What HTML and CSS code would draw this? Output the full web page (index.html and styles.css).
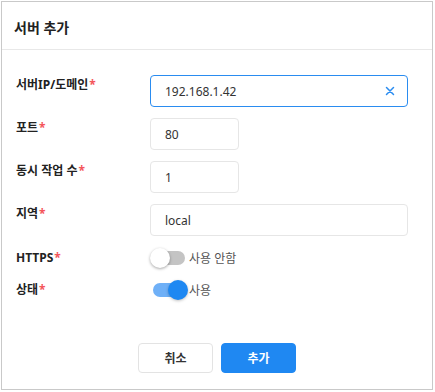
FILE: index.html
```html
<!DOCTYPE html>
<html lang="ko">
<head>
<meta charset="utf-8">
<link rel="stylesheet" href="styles.css">
</head>
<body>
<div class="dialog">
  <div class="header"><span class="title">서버 추가</span></div>
  <div class="body">
    <div class="row">
      <label class="label">서버IP/도메인<span class="req">*</span></label>
      <div class="input long focused">
        <span class="value">192.168.1.42</span>
        <svg class="clear" width="10" height="10" viewBox="0 0 10 10"><path d="M1.5 1.5 L8.5 8.5 M8.5 1.5 L1.5 8.5" stroke="#2a8cf0" stroke-width="1.5" stroke-linecap="round"/></svg>
      </div>
    </div>
    <div class="row">
      <label class="label">포트<span class="req">*</span></label>
      <div class="input short"><span class="value">80</span></div>
    </div>
    <div class="row">
      <label class="label">동시 작업 수<span class="req">*</span></label>
      <div class="input short"><span class="value">1</span></div>
    </div>
    <div class="row">
      <label class="label">지역<span class="req">*</span></label>
      <div class="input long"><span class="value">local</span></div>
    </div>
    <div class="row sw-row">
      <label class="label">HTTPS<span class="req">*</span></label>
      <div class="switch off"><span class="track"></span><span class="thumb"></span></div>
      <span class="sw-text">사용 안함</span>
    </div>
    <div class="row sw-row">
      <label class="label">상태<span class="req">*</span></label>
      <div class="switch on"><span class="track"></span><span class="thumb"></span></div>
      <span class="sw-text">사용</span>
    </div>
  </div>
  <div class="footer">
    <button class="btn cancel">취소</button>
    <button class="btn primary">추가</button>
  </div>
</div>
</body>
</html>
```
FILE: styles.css
```css
* { box-sizing: border-box; }
html, body { margin: 0; padding: 0; background: #fff; }
body {
  font-family: "Noto Sans", "Noto Sans CJK KR", sans-serif;
  color: #333;
}
.dialog {
  margin: 1px 0 0 1px;
  width: 432px;
  height: 389px;
  border: 1px solid #c9c9c9;
  background: #fff;
  display: flex;
  flex-direction: column;
}
.header {
  height: 48px;
  border-bottom: 1px solid #e8e8e8;
  display: flex;
  align-items: center;
  padding: 3px 12px 0;
}
.title {
  font-size: 14px;
  font-weight: 700;
  color: #222;
}
.body {
  padding: 25px 24px 0 14px;
  display: flex;
  flex-direction: column;
  gap: 11px;
}
.row {
  display: flex;
  align-items: flex-start;
}
.label {
  width: 134px;
  flex: none;
  font-size: 12px;
  font-weight: 700;
  color: #222;
  line-height: 20px;
}
.req { color: #f4555a; margin-left: 1px; }
.input {
  height: 32px;
  border: 1px solid #e6e6e6;
  border-radius: 4px;
  display: flex;
  align-items: center;
  padding: 0 12px 0 14px;
  font-size: 12px;
  color: #333;
}
.input.long { width: 258px; }
.input.short { width: 89px; }
.input.focused { border: 1.5px solid #2a8cf0; }
.value { flex: 1; }
.clear { display: block; }
.sw-row { align-items: center; height: 20px; }
.sw-row:first-of-type { }
.body .sw-row { margin-top: 1px; }
.switch {
  position: relative;
  width: 38px;
  height: 20px;
  flex: none;
}
.track {
  position: absolute;
  left: 3px;
  right: 3px;
  top: 3px;
  height: 14px;
  border-radius: 7px;
  background: #c4c4c4;
}
.thumb {
  position: absolute;
  top: 0;
  width: 20px;
  height: 20px;
  border-radius: 50%;
  background: #fff;
  box-shadow: 0 1px 3px rgba(0,0,0,0.35);
  left: 0;
}
.switch.on .track { background: #6fb0f7; }
.switch.on .thumb { left: 18px; background: #1e88f2; box-shadow: 0 1px 3px rgba(0,0,0,0.25); }
.sw-text {
  font-size: 12px;
  color: #555;
  margin-left: 1px;
}
.footer {
  display: flex;
  justify-content: center;
  gap: 8px;
  margin-top: auto;
  padding-bottom: 16px;
}
.btn {
  width: 75px;
  height: 30px;
  border-radius: 4px;
  font-family: "Noto Sans", "Noto Sans CJK KR", sans-serif;
  font-size: 12px;
  font-weight: 700;
  cursor: pointer;
}
.btn.cancel {
  background: #fff;
  border: 1px solid #e3e3e3;
  color: #333;
}
.btn.primary {
  background: #1f88f2;
  border: 1px solid #1f88f2;
  color: #fff;
}
```
